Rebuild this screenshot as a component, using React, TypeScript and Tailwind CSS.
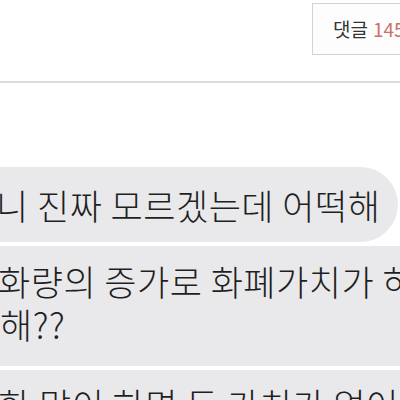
import React from 'react';

const font = { fontFamily: '"Noto Sans CJK KR", "Noto Sans", sans-serif' };

export default function App() {
  return (
    <div className="w-[400px] h-[400px] overflow-hidden bg-white" style={font}>
      {/* Header */}
      <div className="h-[83px] border-b-2 border-[#dcdcdc] pt-[3px] pl-[312px]">
        <div className="flex h-[52px] w-[110px] items-center border border-[#d2d2d2] bg-[#fdfdfd] pl-[20px] text-[19px] text-[#333]">
          <span>댓글</span>
          <span className="ml-[5px] text-[#cc7068]">145</span>
        </div>
      </div>

      {/* Chat */}
      <div className="mt-[84px] flex flex-col gap-[4px]">
        <div className="ml-[-20px] flex h-[75px] w-[418px] items-center rounded-r-[38px] bg-[#e9e9eb] pl-[16px] text-[35px] font-light leading-none tracking-[0.5px] text-[#1f1f1f] whitespace-nowrap">
          니 진짜 모르겠는데 어떡해
        </div>
        <div className="ml-[-20px] flex h-[120px] w-[440px] flex-col justify-center bg-[#e9e9eb] pb-[8px] pl-[18px] text-[35px] font-light leading-[43px] tracking-[0.5px] text-[#1f1f1f]">
          <span className="whitespace-nowrap">화량의 증가로 화폐가치가 하</span>
          <span className="pl-[2px] whitespace-nowrap">해??</span>
        </div>
        <div className="ml-[-20px] h-[80px] w-[440px] bg-[#e9e9eb] pl-[18px] pt-[12px] text-[35px] font-light leading-[43px] tracking-[0.5px] text-[#1f1f1f] whitespace-nowrap">
          한 많이 하면 돈 가치가 없어
        </div>
      </div>
    </div>
  );
}
